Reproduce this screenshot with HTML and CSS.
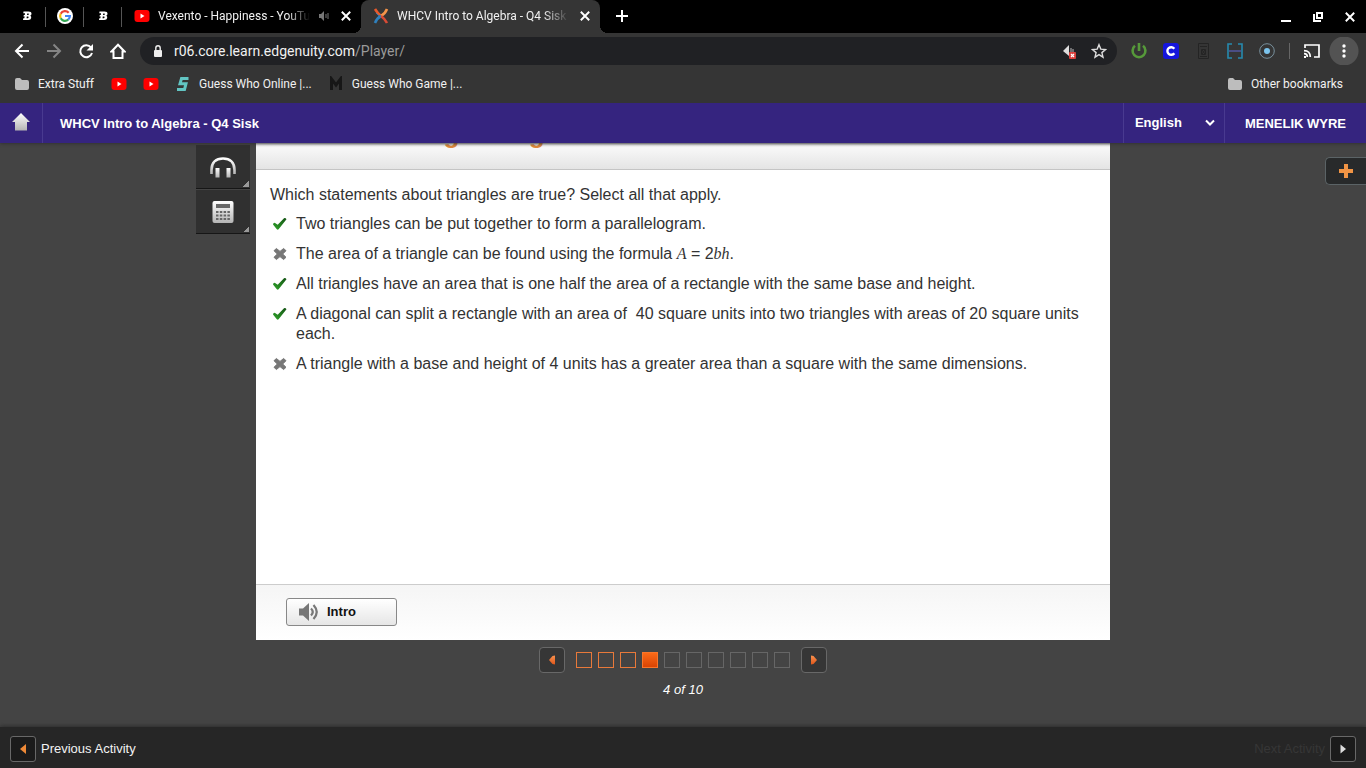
FILE: index.html
```html
<!DOCTYPE html>
<html lang="en">
<head>
<meta charset="utf-8">
<meta name="viewport" content="width=device-width, initial-scale=1">
<title>WHCV Intro to Algebra - Q4 Sisk</title>
<link rel="stylesheet" href="styles.css">
</head>
<body>
<svg class="defs" aria-hidden="true">
  <defs>
    <linearGradient id="metal" x1="0" y1="0" x2="0" y2="1"><stop offset="0" stop-color="#fff"/><stop offset="1" stop-color="#b4b4b4"/></linearGradient>
    <linearGradient id="orange" x1="0" y1="0" x2="0" y2="1"><stop offset="0" stop-color="#f8924f"/><stop offset="1" stop-color="#e0561a"/></linearGradient>
    <linearGradient id="green" x1="1" y1="0" x2="0" y2="1"><stop offset="0" stop-color="#145214"/><stop offset="1" stop-color="#2fa52a"/></linearGradient>
    <symbol id="youtube" viewBox="0 0 16 16"><rect x="0.5" y="2" width="15" height="12" rx="3" fill="#f00"/><path d="M6.500 5.500v5l4-2.500z" fill="#fff"/></symbol>
    <symbol id="bee" viewBox="0 0 16 16"><path fill="#fff" fill-rule="evenodd" d="M4.500 3.500h5q3 0 3 2.200 0 1.500-1.300 2.100 1.300.6 1 2.200-.3 2-3 2H4l.3-1.800h1l.4-1.600H4.500l.3-1.600h1L6 5.300H4.300zM8.300 5.400L8 7h1.200q1.300-.8.300-1.600zM7.800 8.500l-.3 1.700H9q1.300-1 .2-1.700z"/></symbol>
    <symbol id="folder" viewBox="0 0 16 16"><path d="M1 4q0-2 2-2h3l2 2h5q2 0 2 2v6q0 2-2 2H3q-2 0-2-2z" fill="#bdbdbd"/></symbol>
    <symbol id="close" viewBox="0 0 10 10"><path d="M1.500 1.500l7 7m0-7l-7 7" stroke="#fff" stroke-width="1.600" fill="none"/></symbol>
    <symbol id="check" viewBox="0 0 16 14"><path d="M1 7.500q0-1.500 1.700-1.700l3 2L12 1.200q1.500-.6 2.500 1L6.800 12q-1 1.200-2 .2z" fill="url(#green)"/></symbol>
    <symbol id="cross" viewBox="0 0 16 14"><path d="M2 3.700l2.400-2.200L8 4.400l3.600-2.900L14 3.700 10.700 7 14 10.300l-2.400 2.200L8 9.600l-3.600 2.900L2 10.300 5.300 7z" fill="#777" stroke="#777" stroke-linejoin="round"/></symbol>
  </defs>
</svg>

<header class="browser">
  <div class="tabs">
    <button class="tab tab-pinned" aria-label="Pinned tab"><svg class="icon"><use href="#bee"/></svg></button>
    <button class="tab tab-pinned" aria-label="Google"><svg class="icon" viewBox="0 0 16 16"><circle cx="8" cy="8" r="8" fill="#fff"/><g fill="none" stroke-width="2.200"><path d="M11.700 4.800A4.900 4.900 0 0 0 3.700 5.700" stroke="#ea4335"/><path d="M3.700 5.700A5 5 0 0 0 3.700 10.300" stroke="#fbbc05"/><path d="M3.700 10.300A4.900 4.900 0 0 0 11.200 11.700" stroke="#34a853"/><path d="M11.200 11.700A5 5 0 0 0 12.900 8H8" stroke="#4285f4"/></g></svg></button>
    <button class="tab tab-pinned" aria-label="Pinned tab"><svg class="icon"><use href="#bee"/></svg></button>
    <div class="tab tab-page">
      <svg class="icon"><use href="#youtube"/></svg>
      <span class="tab-title">Vexento - Happiness - YouTube</span>
      <svg class="icon-sound" viewBox="0 0 12 12" fill="none" stroke="#777"><path d="M1 4v4h2l3 3V1L3 4z" fill="#777" stroke="none"/><path d="M8 4v4M10 3v6"/></svg>
      <button class="tab-close" aria-label="Close tab"><svg><use href="#close"/></svg></button>
    </div>
    <div class="tab tab-page tab-active">
      <svg class="icon" viewBox="0 0 16 16" fill="none" stroke-width="2.600"><path d="M2 1q3 5 6 7" stroke="#e85a2c"/><path d="M14 1q-2 5-6 7" stroke="#f3944a"/><path d="M8 8q-4 2-6 7" stroke="#2f80bd"/><path d="M8 8q4 3 6 7" stroke="#d84b35"/><path d="M3 5q2 3 5 3" stroke="#3e78a8" stroke-width="1"/></svg>
      <span class="tab-title">WHCV Intro to Algebra - Q4 Sisk</span>
      <button class="tab-close" aria-label="Close tab"><svg><use href="#close"/></svg></button>
    </div>
    <button class="new-tab" aria-label="New tab"><svg class="icon-new" viewBox="0 0 12 12"><path d="M6 0v12M0 6h12" stroke="#fff" stroke-width="2"/></svg></button>
    <div class="window-controls">
      <button aria-label="Minimize"><svg viewBox="0 0 12 12"><path d="M1 10h10" stroke="#fff" stroke-width="2"/></svg></button>
      <button aria-label="Restore"><svg viewBox="0 0 12 12" fill="none" stroke="#fff" stroke-width="2"><path d="M5 2h5v5H5zM2 3v7h7"/></svg></button>
      <button aria-label="Close window"><svg viewBox="0 0 10 10"><use href="#close"/></svg></button>
    </div>
  </div>

  <div class="toolbar">
    <button class="tool" aria-label="Back"><svg class="icon" viewBox="0 0 16 16" fill="none" stroke="#fff" stroke-width="2"><path d="M15 8H2M8.500 1.500L2 8l6.500 6.500"/></svg></button>
    <button class="tool" aria-label="Forward"><svg class="icon" viewBox="0 0 16 16" fill="none" stroke="#858585" stroke-width="2"><path d="M1 8h13M7.500 1.500L14 8l-6.500 6.500"/></svg></button>
    <button class="tool" aria-label="Reload"><svg class="icon" viewBox="0 0 16 16" fill="none" stroke="#fff" stroke-width="2"><path d="M13 4.500A6 6 0 1 0 14 10"/><path d="M15 1v6.500H8.500z" fill="#fff" stroke="none"/></svg></button>
    <button class="tool" aria-label="Home"><svg class="icon" viewBox="0 0 16 16" fill="none" stroke="#fff" stroke-width="2"><path d="M1.500 8.500L8 1.800l6.500 6.700H12.500V15h-9V8.500z"/></svg></button>
    <div class="address">
      <svg class="icon-lock" viewBox="0 0 10 12"><rect x="1" y="5" width="8" height="7" rx="1" fill="#eee"/><path d="M2.800 5V3q0-2.200 2.200-2.200T7.200 3v2" fill="none" stroke="#eee" stroke-width="1.400"/></svg>
      <span class="url">r06.core.learn.edgenuity.com<span class="url-path">/Player/</span></span>
      <svg class="icon" viewBox="0 0 16 16"><path d="M2 8l6-6v11z" fill="#ddd"/><path d="M10 5v4M12 6v3" stroke="#bbb"/><rect x="8" y="9" width="7" height="7" rx="1" fill="#d9403c"/><path d="M10 11l3 3m0-3l-3 3" stroke="#fff" stroke-width="1.200"/></svg>
      <svg class="icon icon-star" viewBox="0 0 16 16" fill="none" stroke="#ddd" stroke-width="1.400"><path d="M8 1.700l1.800 4.400 4.700.4-3.600 3.100 1.100 4.600L8 11.700l-4 2.500 1.100-4.600-3.600-3.100 4.700-.4z"/></svg>
    </div>
    <button class="tool" aria-label="Power extension"><svg class="icon" viewBox="0 0 16 16" fill="none" stroke="#56993a" stroke-width="2.600"><path d="M4 2.800a6.400 6.400 0 1 0 8 0M8 0v8"/></svg></button>
    <button class="tool" aria-label="Clever extension"><svg class="icon" viewBox="0 0 16 16"><rect width="16" height="16" rx="3" fill="#1515dc"/><path d="M11.300 5.800a3.800 3.800 0 1 0 0 4.400" fill="none" stroke="#fff" stroke-width="2.400"/></svg></button>
    <button class="tool" aria-label="Document extension"><svg class="icon" viewBox="0 0 16 16" fill="none" stroke="#242424"><path d="M3.500 .5h10v15h-10zM5 3.500h7M6.500 6.500h4v5h-4zM7 7l3 4m0-4l-3 4M5 13.500h7"/></svg></button>
    <button class="tool" aria-label="Bracket extension"><svg class="icon" viewBox="0 0 16 16" fill="none" stroke="#268aaf" stroke-width="1.600"><path d="M5 1H1v14h4M11 1h4v14h-4"/><path d="M2 8h12" stroke="#51559a"/></svg></button>
    <button class="tool" aria-label="Target extension"><svg class="icon" viewBox="0 0 16 16"><circle cx="8" cy="8" r="7.300" fill="none" stroke="#78909c"/><circle cx="8" cy="8" r="3" fill="#7cc5ee"/></svg></button>
    <span class="divider"></span>
    <button class="tool" aria-label="Cast"><svg class="icon" viewBox="0 0 16 16" fill="none" stroke="#fff" stroke-width="1.700"><path d="M1 5V2h14v12h-5M0 7.700q6.300 0 6.300 6.300M0 10.700q3.300 0 3.300 3.300"/><path d="M0 13h2v2H0z" fill="#fff" stroke="none"/></svg></button>
    <button class="tool tool-menu" aria-label="Menu"><svg class="icon" viewBox="0 0 16 16" fill="#fff"><circle cx="8" cy="3" r="1.700"/><circle cx="8" cy="8" r="1.700"/><circle cx="8" cy="13" r="1.700"/></svg></button>
  </div>

  <nav class="bookmarks" aria-label="Bookmarks">
    <a href="#"><svg class="icon"><use href="#folder"/></svg>Extra Stuff</a>
    <a href="#" aria-label="YouTube"><svg class="icon"><use href="#youtube"/></svg></a>
    <a href="#" aria-label="YouTube"><svg class="icon"><use href="#youtube"/></svg></a>
    <a href="#"><svg class="icon" viewBox="0 0 16 16" fill="none" stroke="#62c5c3" stroke-width="3"><path d="M13.500 2.500H6.500L5 7.700h6L9.500 13.500H2"/></svg>Guess Who Online |...</a>
    <a href="#"><svg class="icon" viewBox="0 0 16 16" fill="none" stroke="#171717" stroke-width="3"><path d="M3.500 14V3L8 9l4.500-6v11"/></svg>Guess Who Game |...</a>
    <a class="bookmark-other" href="#"><svg class="icon"><use href="#folder"/></svg>Other bookmarks</a>
  </nav>
</header>

<header class="app-bar">
  <a class="app-home" href="#" aria-label="Home"><svg viewBox="0 0 20 20"><path d="M10 0l9 9h-3v8.500H4V9H1z" fill="url(#metal)"/></svg></a>
  <h1 class="course">WHCV Intro to Algebra - Q4 Sisk</h1>
  <div class="language">
    <select aria-label="Language"><option>English</option></select>
    <svg class="chevron" viewBox="0 0 10 8" fill="none" stroke="#fff" stroke-width="2"><path d="M1 1.500l4 4 4-4"/></svg>
  </div>
  <a class="user" href="#">MENELIK WYRE</a>
</header>

<main class="player">
  <div class="stage">
    <div class="side-tools">
      <button class="side-tool" aria-label="Audio"><svg viewBox="0 0 28 28" fill="none" stroke="url(#metal)"><path d="M2.500 21v-4C2.500 9.500 7 5.500 14 5.500S25.500 9.500 25.500 17v4" stroke-width="2.600"/><path d="M6.500 15h4v9.500h-4zM17.500 15h4v9.500h-4z" fill="url(#metal)" stroke="none"/></svg></button>
      <button class="side-tool" aria-label="Calculator"><svg viewBox="0 0 28 28"><rect x="3.500" y="3" width="21" height="22" rx="2" fill="url(#metal)"/><path d="M7 6h14v4H7z" fill="#666"/><path d="M7 14h14M7 17.500h14M7 21h14" stroke="#666" stroke-width="2" stroke-dasharray="2.500 1.300"/></svg></button>
    </div>
    <section class="card">
      <div class="card-title"><h2>Understanding Triangles</h2></div>
      <div class="question">
        <p>Which statements about triangles are true? Select all that apply.</p>
        <ul class="answers">
          <li><svg role="img" aria-label="Correct"><use href="#check"/></svg><span>Two triangles can be put together to form a parallelogram.</span></li>
          <li><svg role="img" aria-label="Incorrect"><use href="#cross"/></svg><span>The area of a triangle can be found using the formula <i>A</i> = 2<i>bh</i>.</span></li>
          <li><svg role="img" aria-label="Correct"><use href="#check"/></svg><span>All triangles have an area that is one half the area of a rectangle with the same base and height.</span></li>
          <li><svg role="img" aria-label="Correct"><use href="#check"/></svg><span>A diagonal can split a rectangle with an area of&nbsp; 40 square units into two triangles with areas of 20 square units each.</span></li>
          <li><svg role="img" aria-label="Incorrect"><use href="#cross"/></svg><span>A triangle with a base and height of 4 units has a greater area than a square with the same dimensions.</span></li>
        </ul>
      </div>
      <div class="card-foot">
        <button class="intro"><svg viewBox="0 0 22 20"><path d="M1 6.500h4L11 1v18l-6-5.500H1z" fill="#777"/><path d="M13 6.500q3.500 3.500 0 7M15.500 3q6.500 7 0 14" fill="none" stroke="#777" stroke-width="2.200"/></svg>Intro</button>
      </div>
    </section>
    <button class="add" aria-label="Add note"><svg viewBox="0 0 16 16"><path d="M8 1v14M1 8h14" stroke="#f09445" stroke-width="4"/></svg></button>
  </div>

  <div class="pager">
    <div class="pager-row">
      <button class="square-button" aria-label="Previous frame"><svg viewBox="0 0 12 12"><path d="M9 1.500v9L6.500 10 3 6l3.500-4z" fill="url(#orange)"/></svg></button>
      <div class="frames">
        <button class="frame frame-done" aria-label="Frame 1"></button>
        <button class="frame frame-done" aria-label="Frame 2"></button>
        <button class="frame frame-done" aria-label="Frame 3"></button>
        <button class="frame frame-current" aria-label="Frame 4"></button>
        <button class="frame" aria-label="Frame 5"></button>
        <button class="frame" aria-label="Frame 6"></button>
        <button class="frame" aria-label="Frame 7"></button>
        <button class="frame" aria-label="Frame 8"></button>
        <button class="frame" aria-label="Frame 9"></button>
        <button class="frame" aria-label="Frame 10"></button>
      </div>
      <button class="square-button" aria-label="Next frame"><svg viewBox="0 0 12 12"><path d="M3 1.500v9L5.500 10 9 6 5.500 2z" fill="url(#orange)"/></svg></button>
    </div>
    <p class="count">4 of 10</p>
  </div>
</main>

<footer class="activity-bar">
  <button class="activity"><span class="square-button"><svg viewBox="0 0 12 12"><path d="M9 1v10L3 6z" fill="#ee8937"/></svg></span>Previous Activity</button>
  <button class="activity activity-next">Next Activity<span class="square-button"><svg viewBox="0 0 12 12"><path d="M3.500 1.500v9L9 6z" fill="#ddd"/></svg></span></button>
</footer>
</body>
</html>
```
FILE: styles.css
```css
* { box-sizing: border-box; }

body {
  margin: 0;
  min-height: 100vh;
  display: flex;
  flex-direction: column;
  background: #444;
  color: #333;
  font: 16px/20px "Liberation Sans", Arial, sans-serif;
}

button {
  margin: 0;
  padding: 0;
  border: 0;
  background: none;
  color: inherit;
  font: inherit;
}

a { color: inherit; text-decoration: none; }
h1, h2, p, ul { margin: 0; padding: 0; }
svg { display: block; flex: none; }
.defs { position: absolute; width: 0; height: 0; }
.icon { width: 16px; height: 16px; }

/* Browser frame */
.browser {
  background: #353535;
  color: #f1f1f1;
  font: 12px/16px Roboto, sans-serif;
}

.tabs {
  display: flex;
  height: 33px;
  padding-left: 8px;
  background: #000;
}

.tab { display: flex; align-items: center; padding-bottom: 1px; }

.tab-pinned {
  width: 38px;
  justify-content: center;
  background: linear-gradient(#555, #555) right center / 1px 20px no-repeat;
}

.tab-page {
  width: 239px;
  gap: 8px;
  padding: 0 7px 1px 12px;
}

.tab-title {
  flex: 1;
  overflow: hidden;
  white-space: nowrap;
  mask-image: linear-gradient(to right, #000 85%, transparent);
}

.icon-sound { width: 12px; height: 12px; }

.tab-close {
  width: 16px;
  height: 16px;
  display: grid;
  place-items: center;
}

.tab-close svg { width: 12px; height: 12px; }

.tab-active {
  position: relative;
  background: #353535;
  border-radius: 8px 8px 0 0;
}

.tab-active::before,
.tab-active::after {
  content: "";
  position: absolute;
  bottom: 0;
  width: 8px;
  height: 8px;
}

.tab-active::before {
  left: -8px;
  background: radial-gradient(circle at 0 0, transparent 8px, #353535 8px);
}

.tab-active::after {
  right: -8px;
  background: radial-gradient(circle at 100% 0, transparent 8px, #353535 8px);
}

.new-tab {
  width: 44px;
  padding-bottom: 1px;
  display: grid;
  place-items: center;
}

.icon-new { width: 12px; height: 12px; }
.window-controls { display: flex; margin-left: auto; }

.window-controls button {
  width: 32px;
  display: grid;
  place-items: center;
}

.window-controls svg { width: 12px; height: 12px; }

.toolbar {
  display: flex;
  align-items: center;
  height: 36px;
  padding: 0 6px;
}

.tool {
  width: 32px;
  height: 28px;
  display: grid;
  place-items: center;
}

.tool-menu { background: radial-gradient(circle, #535353 14px, transparent 15px); }

.address {
  flex: 1;
  display: flex;
  align-items: center;
  height: 28px;
  margin: 0 6px;
  padding: 0 10px 0 13px;
  border-radius: 14px;
  background: #202124;
  font-size: 14px;
}

.icon-lock { width: 10px; height: 12px; }
.url { flex: 1; margin-left: 11px; }
.url-path { color: #9a9a9a; }
.icon-star { margin-left: 14px; }

.divider {
  width: 1px;
  height: 16px;
  margin: 0 6px;
  background: #666;
}

.bookmarks {
  display: flex;
  align-items: center;
  gap: 16px;
  height: 34px;
  padding: 0 23px 4px 14px;
}

.bookmarks a {
  display: flex;
  align-items: center;
  gap: 8px;
}

.bookmarks a:first-child { margin-right: 1px; }
.bookmarks .bookmark-other { margin-left: auto; }

/* Course header */
.app-bar {
  display: flex;
  height: 40px;
  background: #35247f;
  color: #fff;
  font-size: 13px;
  font-weight: bold;
  z-index: 1;
  box-shadow: 0 1px 3px #333;
}

.app-home {
  display: grid;
  place-items: center;
  width: 43px;
  border-right: 1px solid #493a90;
}

.app-home svg { width: 20px; height: 20px; }

.course {
  flex: 1;
  padding-left: 17px;
  font-size: 13px;
  line-height: 41px;
}

.language {
  display: flex;
  align-items: center;
  width: 101px;
  padding: 0 9px 0 11px;
  border-left: 1px solid #493a90;
}

.language select {
  flex: 1;
  width: 100%;
  padding: 0;
  border: 0;
  appearance: none;
  background: none;
  color: inherit;
  font: inherit;
}

.chevron { width: 10px; height: 8px; }

.user {
  padding: 0 20px;
  border-left: 1px solid #493a90;
  line-height: 41px;
}

/* Lesson player */
.player {
  flex: 1;
  display: flex;
  flex-direction: column;
}

.stage {
  flex: 1;
  display: grid;
  grid-template-columns: 1fr minmax(0, 854px) 1fr;
}

.side-tools {
  justify-self: end;
  width: 54px;
  margin-right: 6px;
  padding-top: 1px;
}

.side-tool {
  display: grid;
  place-items: center;
  width: 100%;
  height: 45px;
  border-top: 1px solid #444;
  border-bottom: 1px solid #161616;
  background: linear-gradient(135deg, transparent 50%, #999 50%) right 1px bottom 1px / 6px 6px no-repeat #303030;
}

.side-tool svg { width: 28px; height: 28px; }

.card {
  display: flex;
  flex-direction: column;
  background: #fff;
}

.card-title {
  display: flex;
  align-items: flex-end;
  height: 27px;
  padding: 0 14px 20px 20px;
  overflow: hidden;
  border-bottom: 1px solid #c4c4c4;
  background: linear-gradient(#fcfcfc, #e4e4e4);
}

.card-title h2 {
  color: #e08a3c;
  font-size: 26px;
  line-height: 30px;
}

.question { flex: 1; padding: 15px 14px; }

.answers {
  display: flex;
  flex-direction: column;
  gap: 10px;
  margin-top: 9px;
  list-style: none;
}

.answers li { display: flex; gap: 8px; padding-left: 2px; }
.answers svg { width: 16px; height: 14px; margin-top: 3px; }
.answers i { font: italic 16px/16px "Liberation Serif", serif; }

.card-foot {
  display: flex;
  align-items: center;
  height: 56px;
  padding: 0 30px 1px;
  border-top: 1px solid #ccc;
  background: linear-gradient(#f5f5f5, #fff);
}

.intro {
  display: flex;
  align-items: center;
  gap: 7px;
  width: 111px;
  height: 28px;
  padding-left: 11px;
  border: 1px solid #888;
  border-radius: 3px;
  background: linear-gradient(#fff, #e6e6e6);
  color: #111;
  font-size: 13px;
  font-weight: bold;
}

.intro svg { width: 22px; height: 20px; }

.add {
  display: grid;
  place-items: center;
  justify-self: end;
  width: 41px;
  height: 28px;
  margin-top: 14px;
  border: 1px solid #5b6366;
  border-right: 0;
  border-radius: 5px 0 0 5px;
  background: #282a2b;
}

.add svg { width: 16px; height: 16px; }

.pager { padding: 7px 0 27px; }

.pager-row {
  display: flex;
  align-items: center;
  justify-content: center;
  gap: 11px;
}

.square-button {
  display: grid;
  place-items: center;
  width: 26px;
  height: 26px;
  border: 1px solid #686868;
  border-radius: 4px;
  background: #363636;
}

.square-button svg { width: 12px; height: 12px; }
.frames { display: flex; gap: 6px; }

.frame {
  width: 16px;
  height: 16px;
  border: 1px solid #666;
}

.frame-done { border-color: #e8793a; }

.frame-current {
  border-color: #f9762a;
  background: linear-gradient(#fa6a18, #d94404);
}

.count {
  margin-top: 7px;
  color: #fff;
  font-size: 13px;
  font-style: italic;
  text-align: center;
}

/* Activity navigation */
.activity-bar {
  display: flex;
  align-items: center;
  justify-content: space-between;
  height: 41px;
  padding: 2px 10px 0;
  background: #262626;
  box-shadow: 0 -1px 4px #2c2c2c;
  color: #f2f2f2;
  font-size: 13px;
}

.activity { display: flex; align-items: center; gap: 5px; }
.activity .square-button { background: #1b1b1b; border-radius: 3px; }
.activity-next { color: #363636; }
```
